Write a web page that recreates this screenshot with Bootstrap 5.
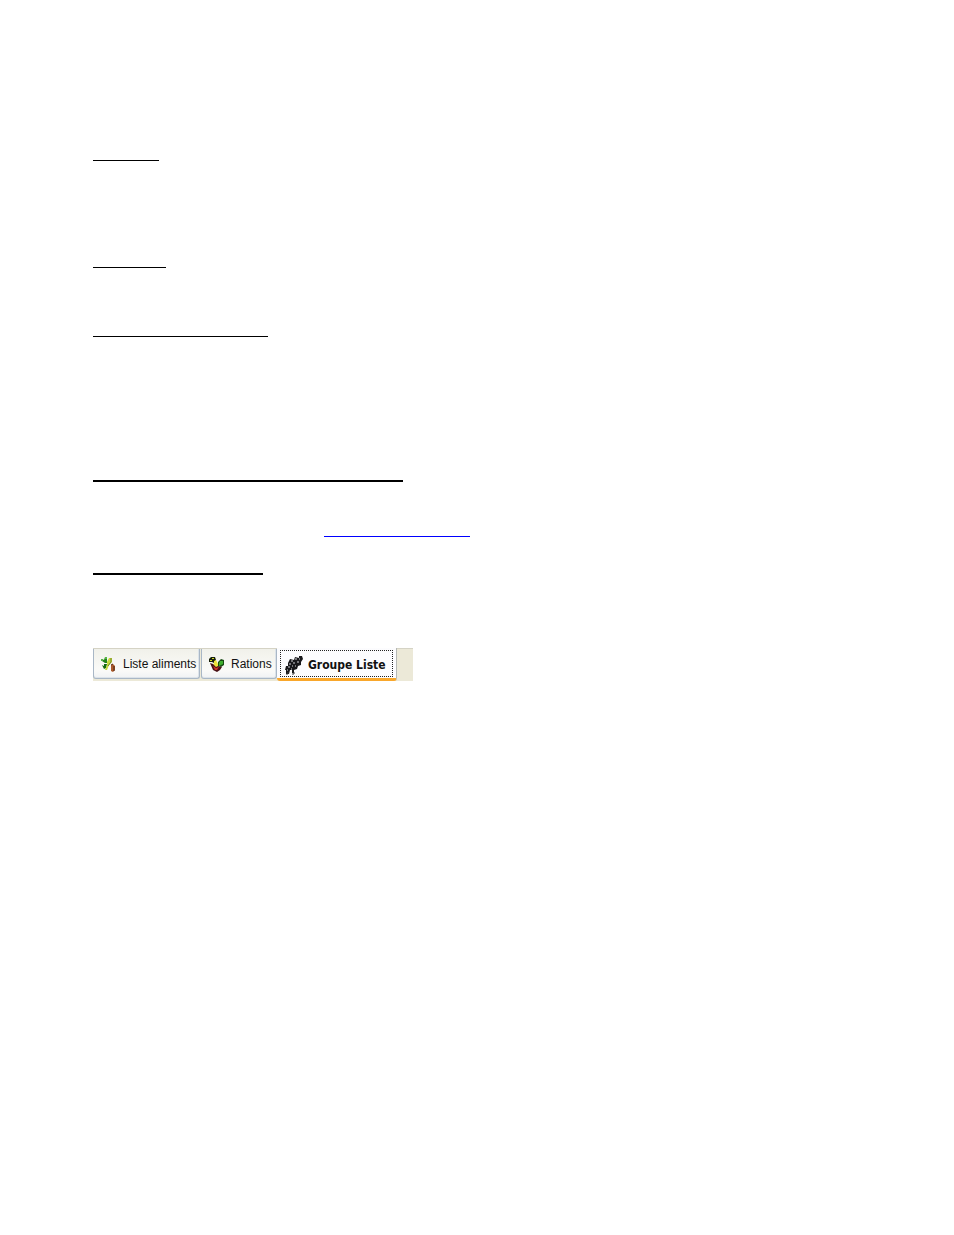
<!DOCTYPE html>
<html lang="fr">
<head>
<meta charset="utf-8">
<meta name="viewport" content="width=device-width, initial-scale=1">
<title>Groupe Liste</title>
<link href="https://cdn.jsdelivr.net/npm/bootstrap@5.3.0/dist/css/bootstrap.min.css" rel="stylesheet">
<style>
body { background: #fff; font-family: "Liberation Sans", Arial, sans-serif; }
.sheet { padding: 160px 93px 0; }
.rule { border: 0; border-top: 1px solid #000; opacity: 1; margin: 0; max-width: 100%; }
.rule-bold { border-top-width: 2px; }
.w-a { width: 66px; }
.w-b { width: 73px; margin-top: 106px; }
.w-c { width: 175px; margin-top: 68px; }
.w-d { width: 310px; margin-top: 143px; }
.w-e { width: 146px; margin: 54px 0 0 231px; border-top-color: #00f; }
.w-f { width: 170px; margin-top: 36px; }
.tabstrip { width: 320px; max-width: 100%; height: 33px; margin-top: 73px; background: #ece9d8; border-top: 1px solid #d5d3c5; }
.tab-btn { display: flex; align-items: center; height: 30px; padding: 0 5px 0 6px; border: 1px solid #a9b7c6; border-top: 0; border-radius: 0 0 3px 3px; background: linear-gradient(#f1f1ea, #fafaf8 75%, #f0f2f4); box-shadow: inset 0 -1px #dce3e9, inset -1px 0 #dce3e9; color: #111; font-size: 12px; line-height: 16px; white-space: nowrap; }
.tab-btn svg { flex: none; width: 18px; height: 20px; }
.tab-one { width: 107px; gap: 5px; }
.tab-two { width: 76px; margin-left: 1px; gap: 5px; }
.tab-on { width: 120px; height: 33px; margin-top: -1px; padding: 3px 3px 2px; border: 0; border-right: 1px solid #b5b8b6; border-bottom: 3px solid #f9a72b; background: #fcfcfe; box-shadow: none; font-family: "DejaVu Sans Condensed", "DejaVu Sans", sans-serif; font-weight: 700; }
.focus-box { display: flex; align-items: center; gap: 5px; width: 100%; height: 27px; padding: 2px 4px 0; border: 1px dotted #222; }
</style>
</head>
<body>
<main class="sheet d-flex flex-column align-items-start">
  <hr class="rule w-a">
  <hr class="rule w-b">
  <hr class="rule w-c">
  <hr class="rule rule-bold w-d">
  <hr class="rule w-e">
  <hr class="rule rule-bold w-f">
  <div class="tabstrip d-flex" role="tablist">
    <button type="button" class="tab-btn tab-one" role="tab" aria-selected="false">
      <svg viewBox="0 0 18 20" aria-hidden="true">
        <path d="M2 5l2 1 1-3 2 1v5H5L2 7z" fill="#23801d"/><path d="M1 5h2v2H1zM5 3h2v2H5z" fill="#54b843"/>
        <path d="M2 11l2 1v-2h3l-1 4-2 1z" fill="#126812"/>
        <path d="M7 8l2-4h3v4l-3 3-2 5H5l2-5z" fill="#c5d83a"/><path d="M11 4v4l-3 4" fill="none" stroke="#71852b"/>
        <path d="M11 11l2-1 2 2v4l-2 2-2-1z" fill="#ac5a2b"/><path d="M11 11l2-1M14 12v5" stroke="#4f2713"/>
      </svg><span>Liste aliments</span>
    </button>
    <button type="button" class="tab-btn tab-two" role="tab" aria-selected="false">
      <svg viewBox="0 0 18 20" aria-hidden="true">
        <path d="M1 5l2-2h4l1 3-2 3-2-1H1z" fill="#17200b"/><path d="M2 6h2v1H2zM4 4h2v1H4z" fill="#d5dd23"/>
        <path d="M6 7l2-1 2 4 1 2-3 2-3-3 1-2z" fill="#eee33a"/>
        <path d="M10 8l3-3 3 1v5l-3 2-3-1z" fill="#174a13"/><path d="M12 7h3v3l-4 2V9z" fill="#3eae2d"/>
        <path d="M2 9l3 1 3 3 2-1 4 1-2 3-3 2-4-2z" fill="#481015"/><path d="M5 12l3 2 3-1-2 3H7z" fill="#ce3529"/>
      </svg><span>Rations</span>
    </button>
    <button type="button" class="tab-btn tab-on" role="tab" aria-selected="true">
      <span class="focus-box">
      <svg viewBox="0 0 18 20" aria-hidden="true">
        <path d="M3 8l2-4 4 1 1-3 4 1V1h3l1 3-2 3v3l-3 1-1 3-3 1v3H7v-3H5l-1 4H1v-4H0l1-4h2z" fill="#18181b"/>
        <path d="M6 6h2M10 4h2M14 4h1M4 9h2M8 8h2M12 7h2M3 12h2M7 11h1M10 11h1M2 15h1M6 14h1" stroke="#d0d0d8"/>
        <path d="M1 19h2v-2M7 19h2v-2" fill="none" stroke="#363638"/>
      </svg><span>Groupe Liste</span></span>
    </button>
  </div>
</main>
<script src="https://cdn.jsdelivr.net/npm/bootstrap@5.3.0/dist/js/bootstrap.bundle.min.js"></script>
</body>
</html>
